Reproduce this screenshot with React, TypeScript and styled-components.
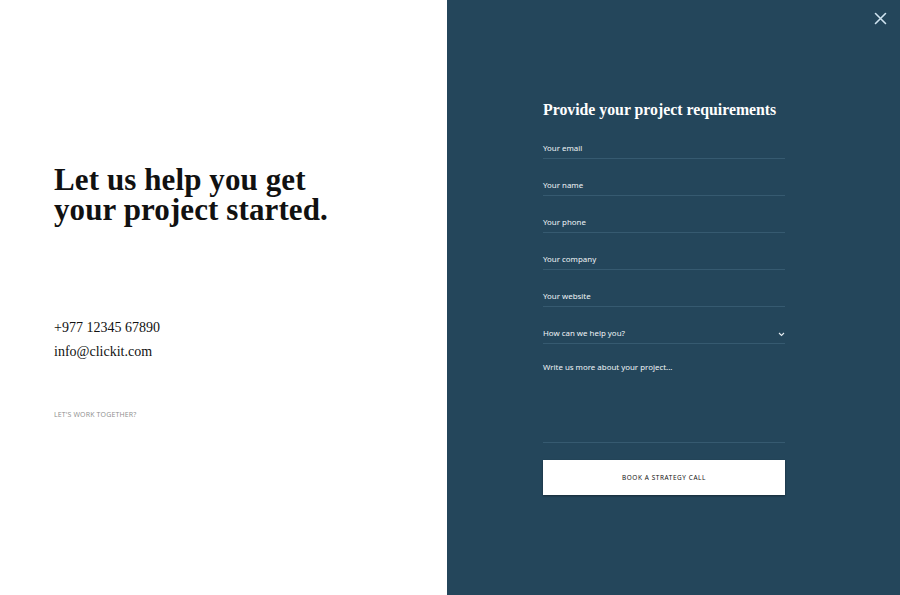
import React from "react";
import styled, { createGlobalStyle } from "styled-components";

const Global = createGlobalStyle`
  html, body { margin: 0; padding: 0; }
  body { width: 900px; height: 595px; overflow: hidden; }
`;

const Page = styled.div`
  display: grid;
  grid-template-columns: 447px 453px;
  width: 900px;
  height: 595px;
`;

const Left = styled.section`
  background: #ffffff;
  padding: 165px 0 0 54px;
  display: flex;
  flex-direction: column;
`;

const Headline = styled.h1`
  margin: 0;
  font-family: "Liberation Serif", serif;
  font-weight: 700;
  font-size: 31px;
  line-height: 30px;
  color: #111;
  letter-spacing: 0.1px;
`;

const Contact = styled.div`
  margin-top: 95px;
  display: flex;
  flex-direction: column;
  gap: 8px;
  font-family: "Liberation Serif", serif;
  font-size: 14px;
  line-height: 16px;
  color: #111;
`;

const Tagline = styled.div`
  margin-top: 50px;
  font-family: "Open Sans", sans-serif;
  font-size: 7px;
  color: #8d8d8d;
  letter-spacing: 0.15px;
`;

const Right = styled.section`
  position: relative;
  background: #24465b;
  padding: 100px 0 0 96px;
`;

const Close = styled.button`
  position: absolute;
  top: 12px;
  right: 13px;
  width: 13px;
  height: 13px;
  padding: 0;
  border: 0;
  background: none;
  display: flex;
`;

const Form = styled.form`
  width: 242px;
  display: flex;
  flex-direction: column;
`;

const Title = styled.h2`
  margin: 0 0 23px;
  font-family: "Liberation Serif", serif;
  font-weight: 700;
  font-size: 15.8px;
  line-height: 20px;
  color: #fff;
  white-space: nowrap;
`;

const Field = styled.div<{ $h?: number }>`
  height: ${(p) => p.$h ?? 37}px;
  border-bottom: 1px solid #365a70;
  display: flex;
  justify-content: space-between;
  align-items: flex-start;
  font-family: "Noto Sans", sans-serif;
  font-size: 7.9px;
  font-weight: 400;
  color: #f0f4f7;
  box-sizing: border-box;
`;

const Label = styled.span<{ $pt?: number }>`
  padding-top: ${(p) => p.$pt ?? 8}px;
`;

const Chevron = styled.span`
  padding-top: 25px;
  display: flex;
`;

const Button = styled.button`
  margin-top: 17px;
  height: 35px;
  width: 242px;
  background: #fff;
  border: 0;
  padding: 0;
  font-family: "Noto Sans", sans-serif;
  font-size: 6.4px;
  font-weight: 400;
  letter-spacing: 0.6px;
  color: #111;
  box-shadow: 0 1px 2px rgba(0, 0, 0, 0.4);
`;

const fields = ["Your email", "Your name", "Your phone", "Your company", "Your website"];

export default function App() {
  return (
    <>
      <Global />
      <Page>
        <Left>
          <Headline>
            Let us help you get
            <br />
            your project started.
          </Headline>
          <Contact>
            <span>+977 12345 67890</span>
            <span>info@clickit.com</span>
          </Contact>
          <Tagline>LET'S WORK TOGETHER?</Tagline>
        </Left>
        <Right>
          <Close aria-label="close">
            <svg width="13" height="13" viewBox="0 0 13 13">
              <path d="M1.5 1.5 L11.5 11.5 M11.5 1.5 L1.5 11.5" stroke="#cfe3f0" strokeWidth="1.6" strokeLinecap="round" />
            </svg>
          </Close>
          <Form>
            <Title>Provide your project requirements</Title>
            {fields.map((f, i) => (
              <Field key={f} $h={i === 0 ? 16 : 37}>
                <Label $pt={i === 0 ? 0 : 21}>{f}</Label>
              </Field>
            ))}
            <Field $h={37}>
              <Label $pt={21}>How can we help you?</Label>
              <Chevron>
                <svg width="7" height="5" viewBox="0 0 7 5">
                  <path d="M1 1 L3.5 3.5 L6 1" stroke="#e6edf1" strokeWidth="1.1" fill="none" />
                </svg>
              </Chevron>
            </Field>
            <Field $h={99}>
              <Label $pt={18}>Write us more about your project...</Label>
            </Field>
            <Button type="button">BOOK A STRATEGY CALL</Button>
          </Form>
        </Right>
      </Page>
    </>
  );
}
